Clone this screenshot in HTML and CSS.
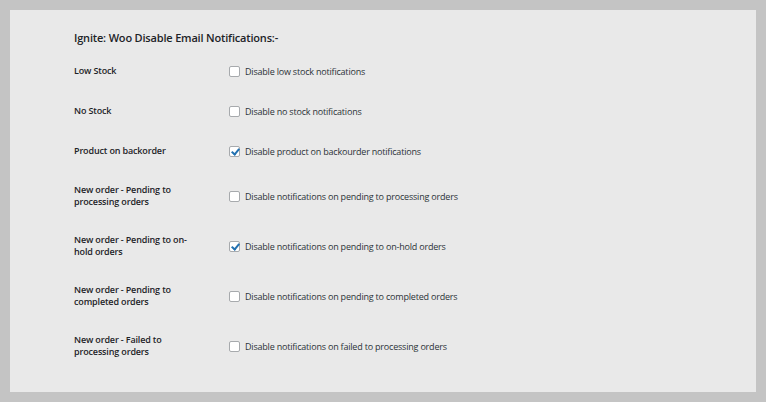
FILE: index.html
```html
<!DOCTYPE html>
<html lang="en">
<head>
    <meta charset="UTF-8">
    <title>Ignite: Woo Disable Email Notifications</title>
    <link rel="stylesheet" href="styles.css">
</head>
<body>

    <div class="panel">
        <h2 class="title">Ignite: Woo Disable Email Notifications:-</h2>

        <table class="form-table">
            <tr class="row">
                <th>Low Stock</th>
                <td><label><span class="box"></span>Disable low stock notifications</label></td>
            </tr>
            <tr class="row">
                <th>No Stock</th>
                <td><label><span class="box"></span>Disable no stock notifications</label></td>
            </tr>
            <tr class="row">
                <th>Product on backorder</th>
                <td><label><span class="box checked"></span>Disable product on backourder notifications</label></td>
            </tr>
            <tr class="row tall">
                <th>New order - Pending to processing orders</th>
                <td><label><span class="box"></span>Disable notifications on pending to processing orders</label></td>
            </tr>
            <tr class="row tall">
                <th>New order - Pending to on-hold orders</th>
                <td><label><span class="box checked"></span>Disable notifications on pending to on-hold orders</label></td>
            </tr>
            <tr class="row tall">
                <th>New order - Pending to completed orders</th>
                <td><label><span class="box"></span>Disable notifications on pending to completed orders</label></td>
            </tr>
            <tr class="row tall">
                <th>New order - Failed to processing orders</th>
                <td><label><span class="box"></span>Disable notifications on failed to processing orders</label></td>
            </tr>
        </table>
    </div>

</body>
</html>
```

FILE: styles.css
```css
html, body {
    margin: 0;
    padding: 0;
}
body {
    background-color: #c4c4c4;
    font-family: "Open Sans", "Noto Sans", Arial, sans-serif;
    color: #1d2327;
    width: 766px;
    height: 402px;
    padding: 10px;
    box-sizing: border-box;
}
.panel {
    background-color: #e9e9e9;
    width: 746px;
    height: 382px;
    box-sizing: border-box;
    padding: 21px 0 0 64px;
}
.title {
    font-size: 11px;
    font-weight: 600;
    margin: 0;
    height: 20px;
    line-height: 14px;
    letter-spacing: -0.18px;
}
.form-table {
    border-collapse: collapse;
    margin-top: 0;
}
.row {
    height: 40px;
}
.row.tall {
    height: 50px;
}
.form-table th {
    width: 118px;
    padding: 0 37px 0 0;
    text-align: left;
    vertical-align: middle;
    font-size: 9px;
    font-weight: 600;
    line-height: 12px;
    letter-spacing: -0.15px;
}
.form-table td {
    padding: 0;
    vertical-align: middle;
}
.form-table label {
    display: flex;
    align-items: center;
    font-size: 9px;
    color: #2c3338;
    letter-spacing: -0.2px;
}
.box {
    width: 9px;
    height: 9px;
    border: 1px solid #a7aaad;
    border-radius: 2px;
    background-color: #fff;
    margin-right: 5px;
    position: relative;
    flex: none;
}
.box.checked::after {
    content: "";
    position: absolute;
    left: 3px;
    top: 0px;
    width: 3px;
    height: 6px;
    border: solid #2271b1;
    border-width: 0 2px 2px 0;
    transform: rotate(40deg);
}
```
